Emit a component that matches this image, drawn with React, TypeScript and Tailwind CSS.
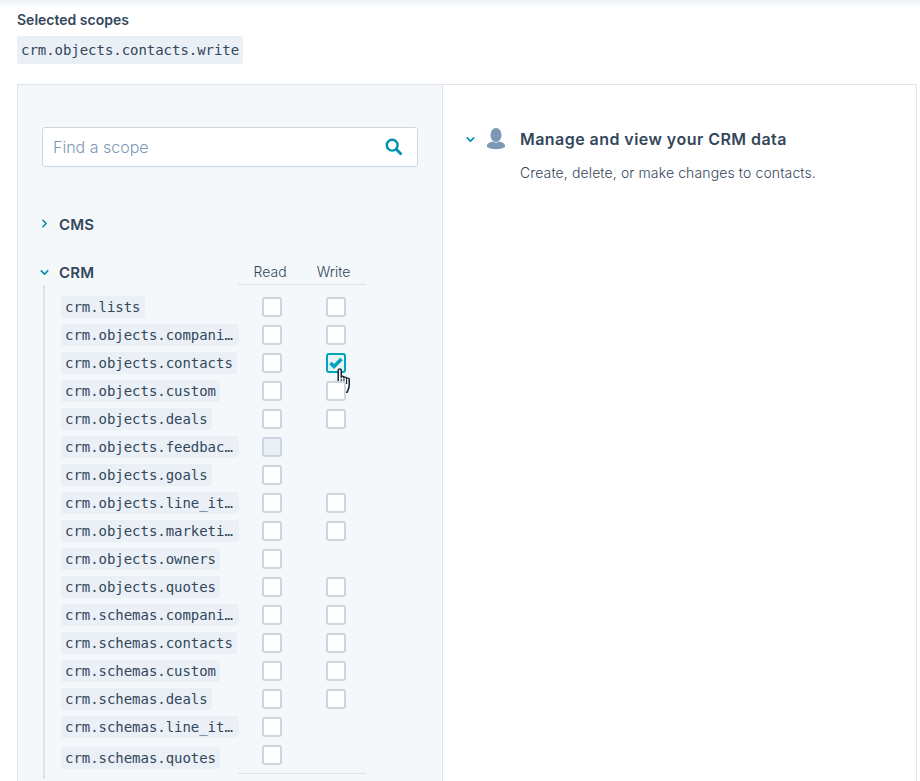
import { ChevronRight, ChevronDown } from "lucide-react";

const sans = "font-['Inter','Noto_Sans',sans-serif]";

interface ScopeRow {
  name: string;
  write: boolean;
  disabled?: boolean;
}

const rows: ScopeRow[] = [
  { name: "crm.lists", write: true },
  { name: "crm.objects.companies", write: true },
  { name: "crm.objects.contacts", write: true },
  { name: "crm.objects.custom", write: true },
  { name: "crm.objects.deals", write: true },
  { name: "crm.objects.feedback_submissions", write: false, disabled: true },
  { name: "crm.objects.goals", write: false },
  { name: "crm.objects.line_items", write: true },
  { name: "crm.objects.marketing_events", write: true },
  { name: "crm.objects.owners", write: false },
  { name: "crm.objects.quotes", write: true },
  { name: "crm.schemas.companies", write: true },
  { name: "crm.schemas.contacts", write: true },
  { name: "crm.schemas.custom", write: true },
  { name: "crm.schemas.deals", write: true },
  { name: "crm.schemas.line_items", write: false },
  { name: "crm.schemas.quotes", write: false },
];

function Box({ checked, disabled }: { checked?: boolean; disabled?: boolean }) {
  if (checked) {
    return (
      <span className="flex h-5 w-5 items-center justify-center rounded-[3px] border-2 border-[#00a4bd] bg-[#e5f5f8]">
        <svg width="14" height="12" viewBox="0 0 14 12">
          <path d="M1.500 6 5 9.500 12.500 2" fill="none" stroke="#00a4bd" strokeWidth="3.500" />
        </svg>
      </span>
    );
  }
  return (
    <span
      className={`block h-5 w-5 rounded-[3px] border-2 border-[#cbd6e2] ${disabled ? "bg-[#eaf0f6]" : "bg-white"}`}
    />
  );
}

function HandCursor() {
  return (
    <svg
      width="18"
      height="25"
      viewBox="0 0 15.500 24.200"
      preserveAspectRatio="none"
      className="absolute left-[7px] top-[15px]"
    >
      <path
        d="M4.500 2.200c0-1.700 2.600-1.700 2.600 0V9c0-1.300 2.300-1.300 2.300 0v.8c0-1.300 2.300-1.300 2.300 0v.9c0-1.300 2.300-1.200 2.300.2V16c0 3.500-1.200 5.500-1.800 7.500H7C5.500 21 3.500 18.500 1.500 15.500c-1.200-1.900.6-3.300 2-2l1 1z"
        fill="#fff"
        stroke="#1b2433"
        strokeWidth="1.300"
        strokeLinejoin="round"
      />
      <path d="M7.100 10.500v5M9.400 10.500v5M11.700 11v4.500" stroke="#1b2433" strokeWidth="1" fill="none" />
    </svg>
  );
}

function Row({ row, last }: { row: ScopeRow; last: boolean }) {
  const isContacts = row.name === "crm.objects.contacts";
  return (
    <div className="flex h-[28px] items-center">
      <div className={`w-[178px] shrink-0 ${last ? "pt-[6px]" : ""}`}>
        <code className="block w-fit max-w-[178px] truncate rounded-[3px] bg-[#eaf0f6] px-[4px] py-[1px] font-['DejaVu_Sans_Mono',monospace] text-[14px] leading-[20px] tracking-[-0.04px] text-[#33475b]">
          {row.name}
        </code>
      </div>
      <div className="ml-[23px] w-[64px] shrink-0">
        <Box disabled={row.disabled} />
      </div>
      {row.write && (
        <div className="relative z-10">
          <Box checked={isContacts} />
          {isContacts && <HandCursor />}
        </div>
      )}
    </div>
  );
}

export default function App() {
  return (
    <div className={`h-[781px] w-[920px] overflow-hidden bg-white ${sans} text-[#33475b]`}>
      <div className="h-[8px] bg-gradient-to-b from-[#eef2f7] to-white" />
      <div className="px-[17px] pt-[4px]">
        <div className="text-[14px] font-semibold leading-[16px]">Selected scopes</div>
        <code className="mt-[8px] block w-fit rounded-[3px] bg-[#eaf0f6] px-[4px] py-[4px] font-['DejaVu_Sans_Mono',monospace] text-[14px] leading-[20px] tracking-[-0.04px]">
          crm.objects.contacts.write
        </code>

        <div className="mt-[20px] flex h-[720px] w-[900px] border border-[#dfe3eb]">
          <div className="w-[425px] shrink-0 border-r border-[#dfe3eb] bg-[#f5f8fa] pl-[24px] pr-[24px] pt-[42px]">
            <div className="flex h-[40px] w-[376px] items-center justify-between rounded-[3px] border border-[#cbd6e2] bg-white pl-[10px] pr-[14px]">
              <span className="text-[16px] font-light text-[#7c98b6]">Find a scope</span>
              <svg width="18" height="18" viewBox="0 0 18 18">
                <circle cx="7.200" cy="7.200" r="5.400" fill="none" stroke="#0091ae" strokeWidth="2.400" />
                <path d="M11 11l5.500 5.500" fill="none" stroke="#0091ae" strokeWidth="2.800" />
              </svg>
            </div>

            <div className="mt-[48px] flex h-[20px] items-center">
              <ChevronRight size={13} strokeWidth={3} className="ml-[-4px] mr-[8px] mt-[-4px] text-[#0091ae]" />
              <span className="text-[15px] font-semibold tracking-[0.2px]">CMS</span>
            </div>

            <div className="mt-[22px] flex h-[28px] items-center">
              <ChevronDown size={13} strokeWidth={3} className="ml-[-4px] mr-[8px] mt-[2px] text-[#0091ae]" />
              <span className="w-[179px] pt-[4px] text-[15px] font-semibold tracking-[0.2px]">CRM</span>
              <div className="flex h-[28px] w-[128px] items-center justify-center gap-[30px] border-b border-[#dfe3eb] pt-[2px] text-[14px] font-light">
                <span>Read</span>
                <span>Write</span>
              </div>
            </div>

            <div className="ml-[1px] border-l-2 border-[#dfe3eb] pb-[5px] pl-[16px] pt-[8px]">
              {rows.map((row, i) => (
                <Row key={row.name} row={row} last={i === rows.length - 1} />
              ))}
              <div className="ml-[177px] mt-[4px] h-px w-[128px] bg-[#dfe3eb]" />
            </div>
          </div>

          <div className="flex-1 pl-[21px] pt-[41px]">
            <div className="flex h-[26px] items-center">
              <ChevronDown size={13} strokeWidth={3} className="text-[#0091ae]" />
              <svg width="20" height="22" viewBox="0 0 20 22" className="ml-[9px]">
                <ellipse cx="10" cy="7" rx="5.500" ry="7" fill="#7c98b6" />
                <path d="M1 18c0-2.500 3-4 6-4.500 1.500 1.500 4.500 1.500 6 0 3 .5 6 2 6 4.500v1c-5 3-13 3-18 0z" fill="#7c98b6" />
              </svg>
              <span className="ml-[14px] text-[16px] font-semibold tracking-[0.45px]">Manage and view your CRM data</span>
            </div>
            <p className="ml-[56px] mt-[11px] text-[14px] font-light leading-[20px] tracking-[0.12px]">Create, delete, or make changes to contacts.</p>
          </div>
        </div>
      </div>
    </div>
  );
}
